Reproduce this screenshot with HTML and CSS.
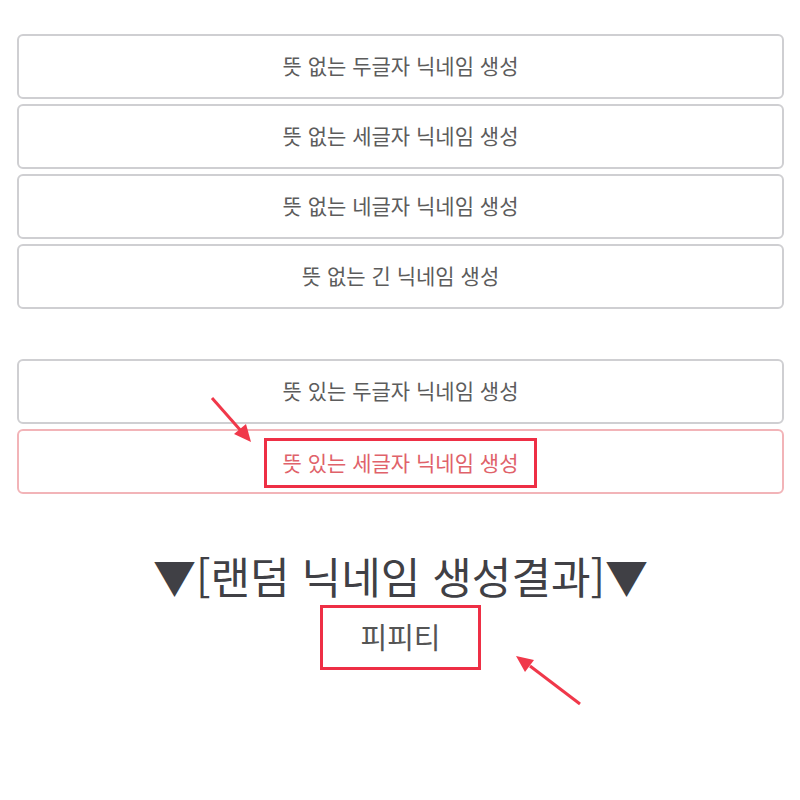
FILE: index.html
```html
<!DOCTYPE html>
<html lang="ko">
<head>
    <meta charset="UTF-8">
    <meta name="viewport" content="width=device-width, initial-scale=1.0">
    <title>랜덤 닉네임 생성기</title>
    <link rel="stylesheet" href="styles.css">
</head>
<body>
    <div class="page">
        <div class="btn-group">
            <button class="gen-btn">뜻 없는 두글자 닉네임 생성</button>
            <button class="gen-btn">뜻 없는 세글자 닉네임 생성</button>
            <button class="gen-btn">뜻 없는 네글자 닉네임 생성</button>
            <button class="gen-btn">뜻 없는 긴 닉네임 생성</button>
        </div>

        <div class="btn-group">
            <button class="gen-btn">뜻 있는 두글자 닉네임 생성</button>
            <button class="gen-btn active"><span class="mark">뜻 있는 세글자 닉네임 생성</span></button>
        </div>

        <div class="result">
            <h1 class="result-title">▼[랜덤 닉네임 생성결과]▼</h1>
            <div class="mark result-name">피피티</div>
        </div>

        <!-- annotation arrows -->
        <svg class="arrow arrow-1" width="60" height="60" viewBox="0 0 60 60">
            <line x1="6" y1="4" x2="36" y2="38" stroke="#f0384a" stroke-width="3"/>
            <polygon points="45,48 28,40 40,30" fill="#f0384a"/>
        </svg>
        <svg class="arrow arrow-2" width="80" height="60" viewBox="0 0 80 60">
            <line x1="72" y1="52" x2="22" y2="14" stroke="#f0384a" stroke-width="3"/>
            <polygon points="8,4 26,8 17,20" fill="#f0384a"/>
        </svg>
    </div>
</body>
</html>
```

FILE: styles.css
```css
* {
    margin: 0;
    padding: 0;
    box-sizing: border-box;
}

html, body {
    background: #fff;
}

body {
    font-family: "Noto Sans CJK KR", "Noto Sans", sans-serif;
    color: #555;
}

.page {
    position: relative;
    min-height: 800px;
    padding: 34px 16px 0 17px;
}

.btn-group {
    display: flex;
    flex-direction: column;
    gap: 5px;
    margin-bottom: 50px;
}

.gen-btn {
    height: 65px;
    width: 100%;
    background: #fff;
    border: 2px solid #cfcfd2;
    border-radius: 6px;
    font-family: inherit;
    font-size: 21px;
    color: #5c5c5c;
    padding-bottom: 3px;
    display: flex;
    align-items: center;
    justify-content: center;
}

.gen-btn.active {
    border-color: #f2b4b8;
    color: #e0626a;
    padding-bottom: 0;
}

.mark {
    border: 3px solid #ee2f45;
}

.gen-btn .mark {
    display: inline-block;
    padding: 7px 15px 9px;
    line-height: 28px;
    margin-top: 2px;
}

.result {
    display: flex;
    flex-direction: column;
    align-items: center;
}

.result-title {
    font-size: 43px;
    font-weight: normal;
    color: #404045;
    line-height: 60px;
    margin-top: 1px;
}

.result-name {
    width: 161px;
    height: 65px;
    display: flex;
    align-items: center;
    justify-content: center;
    font-size: 29px;
    color: #555;
    padding-bottom: 3px;
}

.arrow {
    position: absolute;
}

.arrow-1 {
    left: 206px;
    top: 394px;
}

.arrow-2 {
    left: 508px;
    top: 652px;
}
```
